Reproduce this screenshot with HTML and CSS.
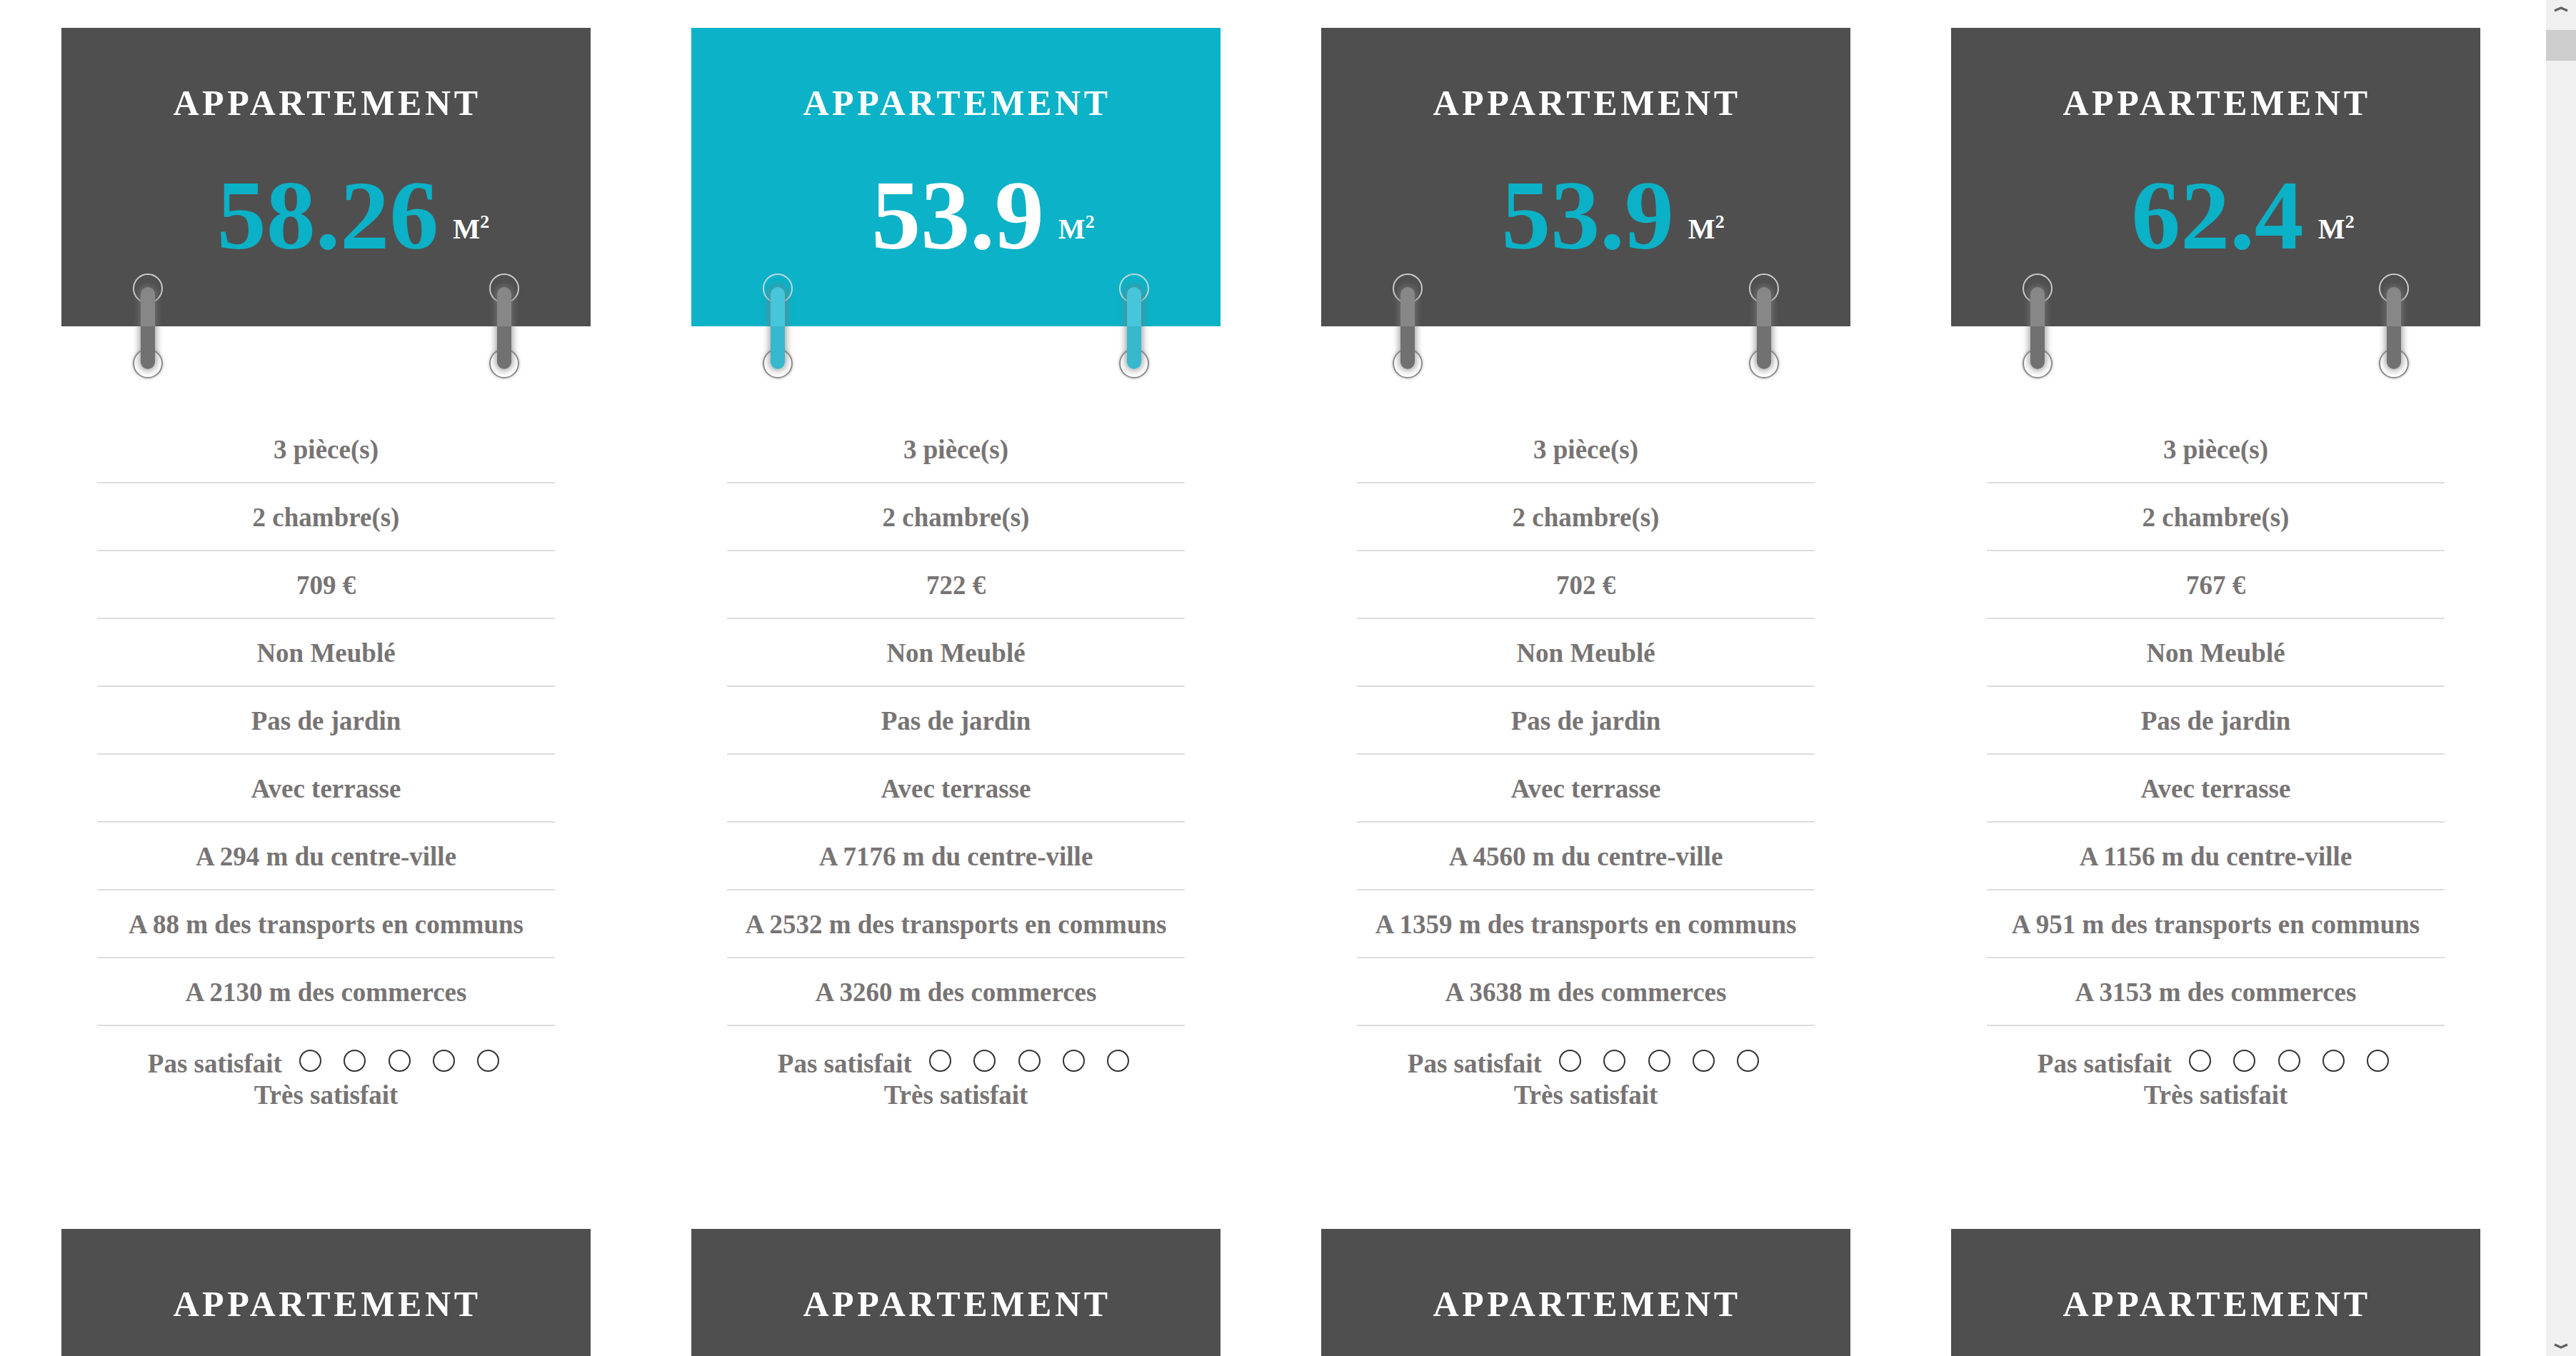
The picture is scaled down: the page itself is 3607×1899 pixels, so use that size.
FILE: index.html
```html
<!DOCTYPE html>
<html lang="fr">
<head>
<meta charset="utf-8">
<title>Appartements</title>
<link rel="stylesheet" href="styles.css">
</head>
<body>
<div class="page">
  <main class="content">
    <div class="grid">

      <article class="card">
        <div class="head">
          <h2 class="title">APPARTEMENT</h2>
          <div class="area"><span class="num">58.26</span><span class="unit">M<sup class="sq">2</sup></span></div>
        </div>
        <div class="ring ring-left"><span class="hole hole-top"></span><span class="hole hole-bottom"></span><span class="bar"></span></div>
        <div class="ring ring-right"><span class="hole hole-top"></span><span class="hole hole-bottom"></span><span class="bar"></span></div>
        <ul class="specs">
          <li class="spec">3 pièce(s)</li>
          <li class="spec">2 chambre(s)</li>
          <li class="spec">709 €</li>
          <li class="spec">Non Meublé</li>
          <li class="spec">Pas de jardin</li>
          <li class="spec">Avec terrasse</li>
          <li class="spec">A 294 m du centre-ville</li>
          <li class="spec">A 88 m des transports en communs</li>
          <li class="spec">A 2130 m des commerces</li>
          <li class="spec rating"><span class="nowrap">Pas satisfait</span> <input class="radio" type="radio" name="r1"> <input class="radio" type="radio" name="r1"> <input class="radio" type="radio" name="r1"> <input class="radio" type="radio" name="r1"> <input class="radio" type="radio" name="r1"> <span class="nowrap">Très satisfait</span></li>
        </ul>
      </article>

      <article class="card featured">
        <div class="head">
          <h2 class="title">APPARTEMENT</h2>
          <div class="area"><span class="num">53.9</span><span class="unit">M<sup class="sq">2</sup></span></div>
        </div>
        <div class="ring ring-left"><span class="hole hole-top"></span><span class="hole hole-bottom"></span><span class="bar"></span></div>
        <div class="ring ring-right"><span class="hole hole-top"></span><span class="hole hole-bottom"></span><span class="bar"></span></div>
        <ul class="specs">
          <li class="spec">3 pièce(s)</li>
          <li class="spec">2 chambre(s)</li>
          <li class="spec">722 €</li>
          <li class="spec">Non Meublé</li>
          <li class="spec">Pas de jardin</li>
          <li class="spec">Avec terrasse</li>
          <li class="spec">A 7176 m du centre-ville</li>
          <li class="spec">A 2532 m des transports en communs</li>
          <li class="spec">A 3260 m des commerces</li>
          <li class="spec rating"><span class="nowrap">Pas satisfait</span> <input class="radio" type="radio" name="r2"> <input class="radio" type="radio" name="r2"> <input class="radio" type="radio" name="r2"> <input class="radio" type="radio" name="r2"> <input class="radio" type="radio" name="r2"> <span class="nowrap">Très satisfait</span></li>
        </ul>
      </article>

      <article class="card">
        <div class="head">
          <h2 class="title">APPARTEMENT</h2>
          <div class="area"><span class="num">53.9</span><span class="unit">M<sup class="sq">2</sup></span></div>
        </div>
        <div class="ring ring-left"><span class="hole hole-top"></span><span class="hole hole-bottom"></span><span class="bar"></span></div>
        <div class="ring ring-right"><span class="hole hole-top"></span><span class="hole hole-bottom"></span><span class="bar"></span></div>
        <ul class="specs">
          <li class="spec">3 pièce(s)</li>
          <li class="spec">2 chambre(s)</li>
          <li class="spec">702 €</li>
          <li class="spec">Non Meublé</li>
          <li class="spec">Pas de jardin</li>
          <li class="spec">Avec terrasse</li>
          <li class="spec">A 4560 m du centre-ville</li>
          <li class="spec">A 1359 m des transports en communs</li>
          <li class="spec">A 3638 m des commerces</li>
          <li class="spec rating"><span class="nowrap">Pas satisfait</span> <input class="radio" type="radio" name="r3"> <input class="radio" type="radio" name="r3"> <input class="radio" type="radio" name="r3"> <input class="radio" type="radio" name="r3"> <input class="radio" type="radio" name="r3"> <span class="nowrap">Très satisfait</span></li>
        </ul>
      </article>

      <article class="card">
        <div class="head">
          <h2 class="title">APPARTEMENT</h2>
          <div class="area"><span class="num">62.4</span><span class="unit">M<sup class="sq">2</sup></span></div>
        </div>
        <div class="ring ring-left"><span class="hole hole-top"></span><span class="hole hole-bottom"></span><span class="bar"></span></div>
        <div class="ring ring-right"><span class="hole hole-top"></span><span class="hole hole-bottom"></span><span class="bar"></span></div>
        <ul class="specs">
          <li class="spec">3 pièce(s)</li>
          <li class="spec">2 chambre(s)</li>
          <li class="spec">767 €</li>
          <li class="spec">Non Meublé</li>
          <li class="spec">Pas de jardin</li>
          <li class="spec">Avec terrasse</li>
          <li class="spec">A 1156 m du centre-ville</li>
          <li class="spec">A 951 m des transports en communs</li>
          <li class="spec">A 3153 m des commerces</li>
          <li class="spec rating"><span class="nowrap">Pas satisfait</span> <input class="radio" type="radio" name="r4"> <input class="radio" type="radio" name="r4"> <input class="radio" type="radio" name="r4"> <input class="radio" type="radio" name="r4"> <input class="radio" type="radio" name="r4"> <span class="nowrap">Très satisfait</span></li>
        </ul>
      </article>

      <article class="card">
        <div class="head"><h2 class="title">APPARTEMENT</h2></div>
      </article>
      <article class="card">
        <div class="head"><h2 class="title">APPARTEMENT</h2></div>
      </article>
      <article class="card">
        <div class="head"><h2 class="title">APPARTEMENT</h2></div>
      </article>
      <article class="card">
        <div class="head"><h2 class="title">APPARTEMENT</h2></div>
      </article>

    </div>
  </main>
  <aside class="scrollbar" aria-hidden="true">
    <div class="sb-arrow">
      <svg width="42" height="28" viewBox="0 0 42 28"><path d="M12 15 L21 11 L30 15" fill="none" stroke="#606060" stroke-width="3.2"/></svg>
    </div>
    <div class="sb-track">
      <div class="sb-thumb"></div>
    </div>
    <div class="sb-arrow">
      <svg width="42" height="28" viewBox="0 0 42 28"><path d="M12 12 L21 16 L30 12" fill="none" stroke="#606060" stroke-width="3.2"/></svg>
    </div>
  </aside>
</div>
</body>
</html>
```

FILE: styles.css
```css
html, body {
  margin: 0;
  padding: 0;
  height: 100%;
  overflow: hidden;
  background: #ffffff;
}

.page {
  display: flex;
  height: 100vh;
  font-family: "Liberation Serif", "Times New Roman", serif;
}

.content {
  flex: 1;
  overflow: hidden;
  padding: 39px 0 0 86px;
}

.grid {
  display: grid;
  grid-template-columns: repeat(4, 741px);
  column-gap: 141px;
  row-gap: 141px;
}

.card {
  position: relative;
}

.head {
  height: 418px;
  box-sizing: border-box;
  padding-top: 76px;
  background: #4f4f4f;
  text-align: center;
  color: #ffffff;
}

.featured .head {
  background: #0cb2c7;
}

.title {
  margin: 0;
  padding-left: 3px;
  font-size: 50px;
  line-height: 58px;
  font-weight: bold;
  letter-spacing: 4.6px;
}

.area {
  margin-top: 60px;
  padding-left: 76px;
  font-weight: bold;
  line-height: 138px;
  white-space: nowrap;
}

.num {
  font-size: 138px;
  color: #0bb1c6;
}

.featured .num {
  color: #ffffff;
}

.unit {
  display: inline-block;
  margin-left: 20px;
  font-size: 40px;
  line-height: 1;
  vertical-align: 14px;
  color: #ffffff;
}

.sq {
  font-size: 26px;
  line-height: 1;
  vertical-align: 15px;
}

/* binder rings */
.ring {
  position: absolute;
  top: 344px;
  width: 42px;
  height: 185px;
}

.ring-left { left: 100px; }
.ring-right { right: 100px; }

.hole {
  position: absolute;
  left: 0;
  width: 42px;
  height: 42px;
  box-sizing: border-box;
  border-radius: 50%;
}

.hole-top {
  top: 0;
  border: 2px solid rgba(225, 225, 225, 0.85);
}

.hole-bottom {
  top: 105px;
  border: 2px solid #8c8c8c;
  box-shadow: 0 0 4px rgba(0, 0, 0, 0.25);
}

.bar {
  position: absolute;
  left: 11px;
  top: 19px;
  width: 20px;
  height: 115px;
  border-radius: 10px;
  background: linear-gradient(to bottom, #878787 0, #878787 55px, #717171 55px, #717171 100%);
  box-shadow: 0 0 10px 2px rgba(125, 125, 125, 0.75);
}

.featured .bar {
  background: linear-gradient(to bottom, #46c5db 0, #46c5db 55px, #38b8cc 55px, #38b8cc 100%);
}

/* specs list */
.specs {
  list-style: none;
  margin: 125px 50px 0;
  padding: 0;
}

.spec {
  padding: 26px 0 24px;
  border-bottom: 2px solid #dddddd;
  text-align: center;
  font-size: 37px;
  line-height: 43px;
  font-weight: bold;
  color: #787474;
}

.spec.rating {
  padding-top: 31px;
  line-height: 44px;
  border-bottom: none;
}

.nowrap {
  white-space: nowrap;
}

.radio {
  -webkit-appearance: none;
  appearance: none;
  display: inline-block;
  width: 31px;
  height: 31px;
  margin: 0 7px 0 15px;
  box-sizing: border-box;
  border: 2px solid #333333;
  border-radius: 50%;
  background: #ffffff;
  vertical-align: 1px;
}

/* scrollbar */
.scrollbar {
  width: 42px;
  flex: none;
  display: flex;
  flex-direction: column;
  background: #f0f0f0;
}

.sb-arrow {
  height: 28px;
  flex: none;
}

.sb-arrow svg {
  display: block;
}

.sb-track {
  flex: 1;
  padding-top: 14px;
}

.sb-thumb {
  height: 43px;
  background: #cdcdcd;
}
```
